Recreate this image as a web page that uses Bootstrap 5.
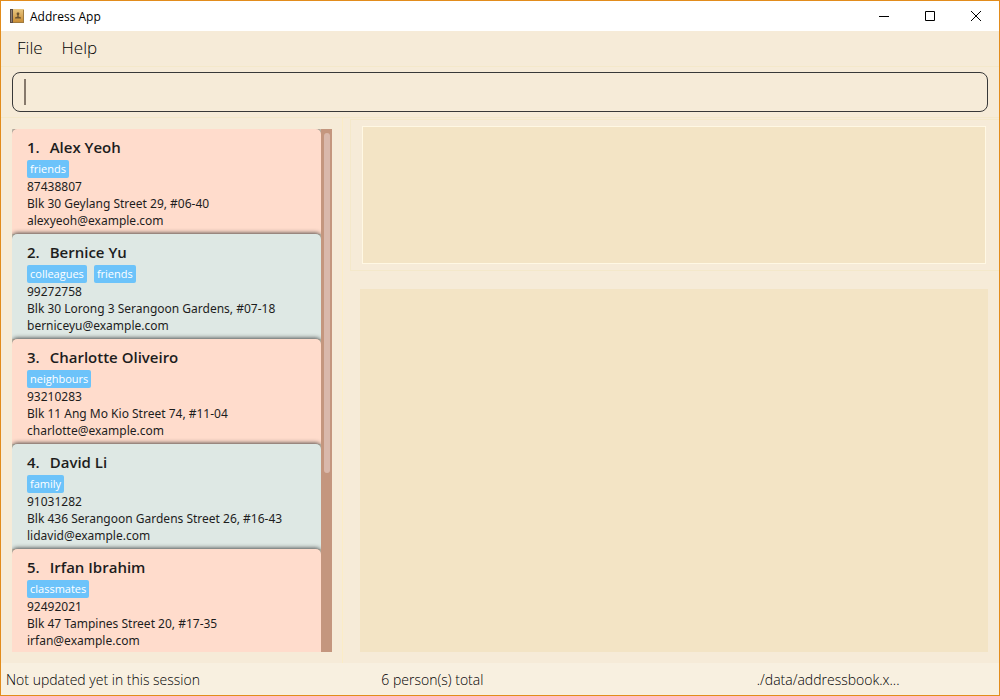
<!DOCTYPE html>
<html lang="en">
<head>
<meta charset="utf-8">
<meta name="viewport" content="width=device-width, initial-scale=1">
<title>Address App</title>
<link href="https://cdn.jsdelivr.net/npm/bootstrap@5.3.0/dist/css/bootstrap.min.css" rel="stylesheet">
<style>
body { font-family: "Noto Sans", "Open Sans", sans-serif; font-size: 12px; line-height: 17px; color: #1d1d1d; background: #f6ebd8; }
.app-window { border: 1px solid #e28c1c; }
.title-bar { height: 30px; padding-left: 9px; gap: 6px; font-family: "Open Sans", sans-serif; color: #000; }
.window-buttons button { width: 46px; height: 30px; }
.menu-row { height: 36px; padding: 0 0 2px 16px; gap: 19px; border-bottom: 1px solid #f4e8ca; }
.menu-row button { font-family: "Open Sans", sans-serif; font-size: 17px; font-weight: 300; line-height: 24px; color: #000; }
.command-row { padding: 5px 11px; border-bottom: 1px solid #f4e8ca; }
.command-box { height: 40px; border: 1px solid #383838; border-radius: 8px; padding: 0 11px; }
.caret { width: 2px; height: 26px; background: #86796c; }
.command-box input { background: transparent; font-size: 17px; outline: 0; }
.work-area { min-height: 0; }
.list-pane { width: 34.3%; padding: 11px 10px 11px 11px; border-right: 1px solid #fbecc6; }
.person { height: 105px; padding: 7px 15px 0; background: #ffdccc; border-radius: 5px 5px 0 0; box-shadow: 0 -1px 4px rgba(40, 40, 40, .8); }
.person:nth-child(even) { background: #dee8e4; }
.person h2 { font-family: "Open Sans", sans-serif; font-size: 15px; line-height: 22px; font-weight: 600; gap: 10px; margin: 0 0 2px; }
.tags { gap: 7px; height: 18px; }
.tag { font-family: "Open Sans", sans-serif; background: #6cc3fa; color: #fff; border-radius: 2px; padding: 0 3px; font-size: 11px; line-height: 18px; }
.track { width: 11px; padding: 4px 2px 4px 3px; background: #c4967e; }
.thumb { height: 66%; border-radius: 3px; background: #d9b8ab; }
.result-wrap { margin: 1px 0 0 7px; padding: 6px 13px 6px 11px; border: 1px solid #f4e8ca; border-right: 0; height: 152px; }
.result { background: #f3e4c5; border: 1px solid #fff8e4; }
.browser { background: #f3e4c5; margin: 18px 11px 11px 17px; }
.status-bar { display: grid; grid-template-columns: 37.8% 37.8% 1fr; height: 32px; background: #f8f0e0; font-family: "Open Sans", sans-serif; font-size: 14px; font-weight: 300; color: #000; padding-left: 5px; }
</style>
</head>
<body>
<div class="app-window vh-100 d-flex flex-column overflow-hidden">
  <header class="title-bar bg-white d-flex align-items-center flex-shrink-0">
    <svg width="14" height="14" viewBox="0 0 14 14" aria-hidden="true">
      <defs><linearGradient id="cover" x2="0" y2="1"><stop stop-color="#e9c782"/><stop offset="1" stop-color="#c98d35"/></linearGradient></defs>
      <path fill="#5b4b42" d="M0 0h3v14H0z"/><path fill="#8f8077" d="M1 1h1v12H1z"/>
      <path fill="url(#cover)" d="M3 0h11v13H3z"/><path fill="#a07b40" d="M3 13h11v1H3zM13 1h1v12h-1z"/>
      <path fill="#6b5230" d="M8 3.500c2 0 1.500 2 .6 3v1l2.400 1v1H5v-1l2.400-1v-1c-.9-1-1.400-3 .6-3z"/>
    </svg>
    <span class="me-auto">Address App</span>
    <div class="window-buttons d-flex">
      <button class="btn p-0 border-0 d-flex align-items-center justify-content-center rounded-0" aria-label="Minimize"><svg width="10" height="10"><path d="M0 5h10v1H0z"/></svg></button>
      <button class="btn p-0 border-0 d-flex align-items-center justify-content-center rounded-0" aria-label="Maximize"><svg width="10" height="10"><path fill="none" stroke="#000" d="M.5.5h9v9h-9z"/></svg></button>
      <button class="btn p-0 border-0 d-flex align-items-center justify-content-center rounded-0" aria-label="Close"><svg width="10" height="10"><path stroke="#000" d="M0 0l10 10M10 0L0 10"/></svg></button>
    </div>
  </header>
  <nav class="menu-row d-flex align-items-center flex-shrink-0" aria-label="Main menu">
    <button class="btn p-0 border-0">File</button>
    <button class="btn p-0 border-0">Help</button>
  </nav>
  <div class="command-row flex-shrink-0">
    <div class="command-box d-flex align-items-center">
      <span class="caret"></span>
      <input class="border-0 flex-fill" type="text" aria-label="Command">
    </div>
  </div>
  <main class="work-area d-flex flex-fill">
    <section class="list-pane d-flex flex-shrink-0">
      <ol class="list-unstyled m-0 flex-fill overflow-hidden">
        <li class="person"><h2 class="d-flex"><span>1.</span><span>Alex Yeoh</span></h2>
          <div class="tags d-flex"><span class="tag">friends</span></div>
          <div>87438807</div><div>Blk 30 Geylang Street 29, #06-40</div><div>alexyeoh@example.com</div></li>
        <li class="person"><h2 class="d-flex"><span>2.</span><span>Bernice Yu</span></h2>
          <div class="tags d-flex"><span class="tag">colleagues</span><span class="tag">friends</span></div>
          <div>99272758</div><div>Blk 30 Lorong 3 Serangoon Gardens, #07-18</div><div>berniceyu@example.com</div></li>
        <li class="person"><h2 class="d-flex"><span>3.</span><span>Charlotte Oliveiro</span></h2>
          <div class="tags d-flex"><span class="tag">neighbours</span></div>
          <div>93210283</div><div>Blk 11 Ang Mo Kio Street 74, #11-04</div><div>charlotte@example.com</div></li>
        <li class="person"><h2 class="d-flex"><span>4.</span><span>David Li</span></h2>
          <div class="tags d-flex"><span class="tag">family</span></div>
          <div>91031282</div><div>Blk 436 Serangoon Gardens Street 26, #16-43</div><div>lidavid@example.com</div></li>
        <li class="person"><h2 class="d-flex"><span>5.</span><span>Irfan Ibrahim</span></h2>
          <div class="tags d-flex"><span class="tag">classmates</span></div>
          <div>92492021</div><div>Blk 47 Tampines Street 20, #17-35</div><div>irfan@example.com</div></li>
      </ol>
      <div class="track flex-shrink-0"><div class="thumb"></div></div>
    </section>
    <section class="d-flex flex-column flex-fill">
      <div class="result-wrap flex-shrink-0"><div class="result h-100"></div></div>
      <div class="browser flex-fill"></div>
    </section>
  </main>
  <footer class="status-bar align-items-center flex-shrink-0">
    <span>Not updated yet in this session</span><span>6 person(s) total</span><span>./data/addressbook.x...</span>
  </footer>
</div>
<script src="https://cdn.jsdelivr.net/npm/bootstrap@5.3.0/dist/js/bootstrap.bundle.min.js"></script>
</body>
</html>
